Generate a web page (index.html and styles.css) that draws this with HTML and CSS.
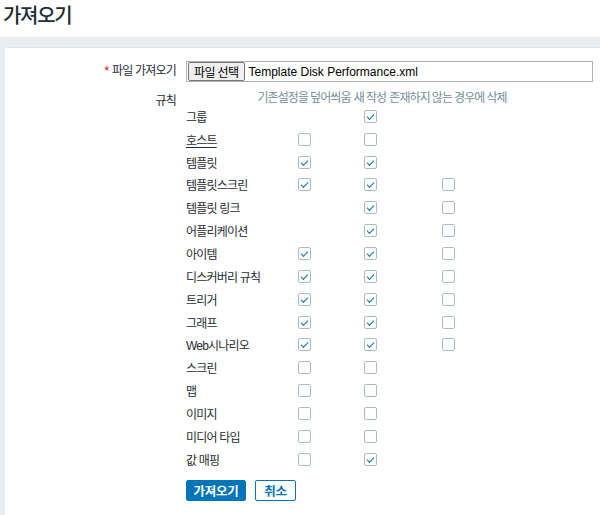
FILE: index.html
```html
<!DOCTYPE html>
<html lang="ko">
<head>
<meta charset="utf-8">
<link rel="stylesheet" href="styles.css">
</head>
<body>
<header class="page-header"><h1>가져오기</h1></header>
<main class="wrap">
  <section class="panel">
    <div class="form-row">
      <div class="label"><span class="req">*</span> 파일 가져오기</div>
      <div class="field">
        <div class="file-input"><span class="file-btn">파일 선택</span><span class="file-name">Template Disk Performance.xml</span></div>
      </div>
    </div>
    <div class="form-row">
      <div class="label label-rules">규칙</div>
      <div class="field">
        <div class="rules">
          <div class="hd"></div>
          <div class="hd">기존설정을 덮어씌움</div>
          <div class="hd">새 작성</div>
          <div class="hd">존재하지 않는 경우에 삭제</div>

          <div class="name">그룹</div><div></div><div><span class="cb on"></span></div><div></div>
          <div class="name link">호스트</div><div><span class="cb"></span></div><div><span class="cb"></span></div><div></div>
          <div class="name">템플릿</div><div><span class="cb on"></span></div><div><span class="cb on"></span></div><div></div>
          <div class="name">템플릿스크린</div><div><span class="cb on"></span></div><div><span class="cb on"></span></div><div><span class="cb"></span></div>
          <div class="name">템플릿 링크</div><div></div><div><span class="cb on"></span></div><div><span class="cb"></span></div>
          <div class="name">어플리케이션</div><div></div><div><span class="cb on"></span></div><div><span class="cb"></span></div>
          <div class="name">아이템</div><div><span class="cb on"></span></div><div><span class="cb on"></span></div><div><span class="cb"></span></div>
          <div class="name">디스커버리 규칙</div><div><span class="cb on"></span></div><div><span class="cb on"></span></div><div><span class="cb"></span></div>
          <div class="name">트리거</div><div><span class="cb on"></span></div><div><span class="cb on"></span></div><div><span class="cb"></span></div>
          <div class="name">그래프</div><div><span class="cb on"></span></div><div><span class="cb on"></span></div><div><span class="cb"></span></div>
          <div class="name">Web시나리오</div><div><span class="cb on"></span></div><div><span class="cb on"></span></div><div><span class="cb"></span></div>
          <div class="name">스크린</div><div><span class="cb"></span></div><div><span class="cb"></span></div><div></div>
          <div class="name">맵</div><div><span class="cb"></span></div><div><span class="cb"></span></div><div></div>
          <div class="name">이미지</div><div><span class="cb"></span></div><div><span class="cb"></span></div><div></div>
          <div class="name">미디어 타입</div><div><span class="cb"></span></div><div><span class="cb"></span></div><div></div>
          <div class="name">값 매핑</div><div><span class="cb"></span></div><div><span class="cb on"></span></div><div></div>
        </div>
        <div class="buttons">
          <button class="btn primary">가져오기</button>
          <button class="btn alt">취소</button>
        </div>
      </div>
    </div>
  </section>
</main>
</body>
</html>
```
FILE: styles.css
```css
html, body {
  margin: 0;
  padding: 0;
  background: #ebeef0;
  font-family: Arial, "Liberation Sans", "Noto Sans CJK KR", sans-serif;
  font-size: 12px;
  color: #1f2c33;
}
.page-header {
  background: #fff;
  height: 37px;
  padding-left: 3px;
  box-sizing: border-box;
}
.page-header h1 {
  margin: 0;
  padding-top: 3px;
  font-size: 20px;
  font-weight: 500;
  line-height: 26px;
  letter-spacing: -1.3px;
}
.wrap {
  padding: 10px 0 0 5px;
}
.panel {
  background: #fff;
  border-top: 1px solid #e2e6e8;
  padding: 13px 0 9px 0;
  height: 470px;
  box-sizing: border-box;
}
.form-row {
  display: grid;
  grid-template-columns: 171px 1fr;
  column-gap: 10px;
  margin-bottom: 9px;
}
.label {
  text-align: right;
  line-height: 21px;
  white-space: nowrap;
  letter-spacing: -0.8px;
}
.label-rules {
  line-height: 16px;
  padding-top: 2px;
}
.req {
  color: #d40000;
  margin-right: 1px;
}
.field {
  padding-right: 7px;
}
.file-input {
  display: flex;
  align-items: center;
  height: 21px;
  border: 1px solid #aab4b8;
  box-sizing: border-box;
  padding: 0 1px;
}
.file-btn {
  display: inline-flex;
  align-items: center;
  height: 19px;
  box-sizing: border-box;
  padding: 0 5px;
  background: #efefef;
  border: 1px solid #767676;
  border-radius: 2px;
  letter-spacing: -0.6px;
  color: #000;
}
.file-name {
  margin-left: 4px;
  color: #000;
}
.rules {
  display: grid;
  grid-template-columns: 72px 92px 40px 116px;
  grid-auto-rows: 22.85px;
  grid-template-rows: 14px;
  align-items: center;
}
.rules > div {
  white-space: nowrap;
}
.rules .hd {
  color: #768d99;
  justify-self: center;
  letter-spacing: -0.9px;
  word-spacing: -0.5px;
  align-self: start;
  line-height: 14px;
}
.rules .hd:first-child {
  justify-self: start;
}
.rules > div:not(.hd):not(.name) {
  display: flex;
  justify-content: center;
}
.name {
  letter-spacing: -0.8px;
}
.name.link {
  text-decoration: underline;
  text-underline-offset: 2px;
}
.cb {
  display: block;
  width: 13px;
  height: 13px;
  box-sizing: border-box;
  border: 1px solid #acbbc2;
  border-radius: 2px;
  background: #fff;
  position: relative;
}
.cb.on::after {
  content: "";
  position: absolute;
  left: 3px;
  top: 1px;
  width: 6px;
  height: 3px;
  border-left: 1px solid #0275b8;
  border-bottom: 1px solid #0275b8;
  transform: translate(-1px, 2px) rotate(-45deg);
}
.buttons {
  display: flex;
  gap: 9px;
  margin-top: 9px;
}
.btn {
  font-family: inherit;
  font-size: 12.5px;
  font-weight: 700;
  height: 21px;
  padding: 0;
  border-radius: 2px;
  letter-spacing: -0.3px;
  cursor: pointer;
}
.btn.primary {
  background: #0275b8;
  border: 1px solid #0275b8;
  color: #fff;
  width: 60px;
}
.btn.alt {
  background: #fff;
  border: 1px solid #0275b8;
  color: #0275b8;
  width: 41px;
}
```
